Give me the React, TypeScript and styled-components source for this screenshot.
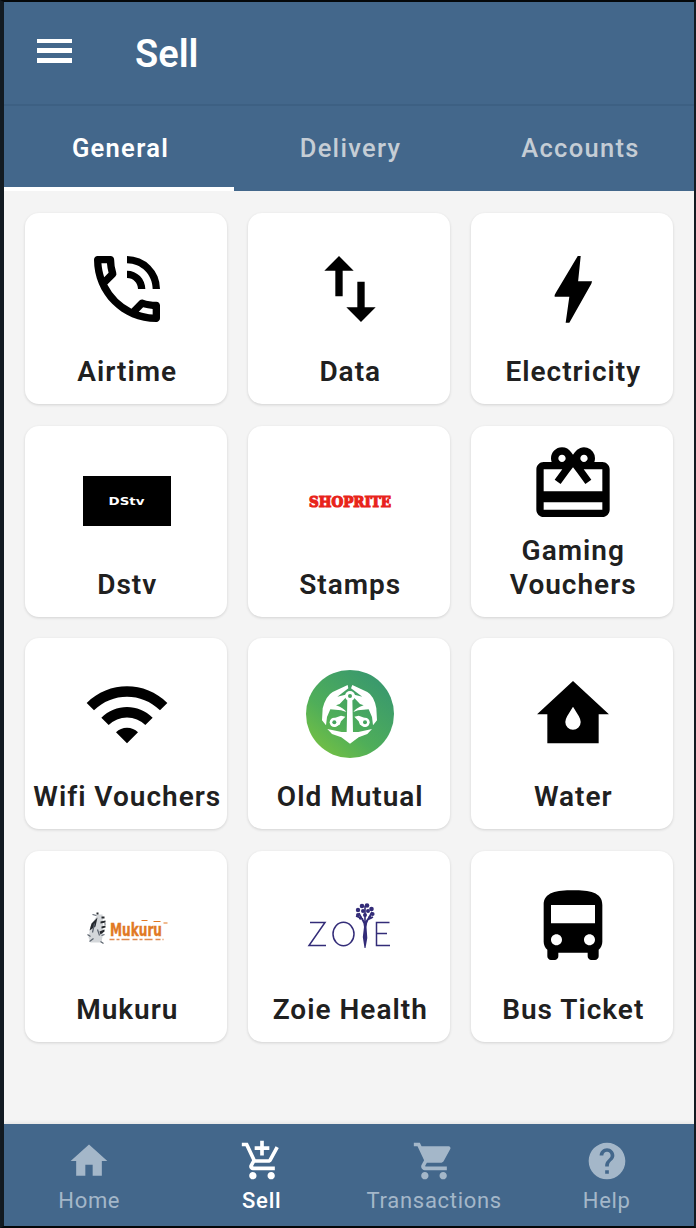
import React from 'react';
import styled, { createGlobalStyle } from 'styled-components';
import {
  MdOutlinePhoneInTalk, MdImportExport, MdRedeem, MdWifi, MdDirectionsBus,
  MdHome, MdAddShoppingCart, MdShoppingCart, MdHelp,
} from 'react-icons/md';

const GlobalStyle = createGlobalStyle`
  * { box-sizing: border-box; }
  body { margin: 0; background: #101820; font-family: Roboto, "Liberation Sans", sans-serif; }
`;

const Screen = styled.div`
  height: 1228px;
  border: solid #131b22;
  border-width: 2px 2px 2px 4px;
  border-top-color: #05080a;
  border-bottom-color: #05080a;
  display: flex;
  flex-direction: column;
  background: #f4f4f4;
`;

const AppBar = styled.header`
  height: 104px;
  flex: none;
  display: flex;
  align-items: center;
  padding: 0 33px 2px;
  background: #43678b;
  border-bottom: 2px solid #3d6083;
`;

const MenuButton = styled.button`
  width: 35px;
  height: 24px;
  padding: 0;
  border: 0;
  background: none;
  display: flex;
  flex-direction: column;
  justify-content: space-between;
  margin-bottom: 3px;
`;

const MenuLine = styled.span`
  height: 4.5px;
  background: #fff;
`;

const Title = styled.h1`
  margin: 3px 0 0 63px;
  font-size: 38px;
  font-weight: 600;
  line-height: 44px;
  color: #fff;
`;

const Tabs = styled.nav`
  height: 85px;
  flex: none;
  display: grid;
  grid-template-columns: repeat(3, 1fr);
  background: #43678b;
`;

const Tab = styled.button<{ $active?: boolean }>`
  border: 0;
  border-bottom: 4px solid ${p => (p.$active ? '#fff' : 'transparent')};
  background: none;
  padding: 2px 0 0 3px;
  font: ${p => (p.$active ? 600 : 500)} 25.5px/30px Roboto, sans-serif;
  letter-spacing: 1.3px;
  color: ${p => (p.$active ? '#fff' : '#c5cdd5')};
`;

const Grid = styled.main`
  flex: 1;
  display: grid;
  grid-template-columns: repeat(3, 202px);
  grid-auto-rows: 191px;
  gap: 21.7px 21px;
  padding: 22px 21px;
`;

const Card = styled.div`
  border-radius: 14px;
  background: #fff;
  box-shadow: 0 1px 3px rgba(0, 0, 0, 0.14);
  display: flex;
  flex-direction: column;
  align-items: center;
  padding: 9px 0 15px 1.5px;
`;

const CardPicture = styled.div`
  flex: 1;
  min-height: 0;
  width: 88px;
  display: flex;
  align-items: center;
  justify-content: center;
  color: #000;
  svg { flex: none; overflow: visible; }
`;

const CardLabel = styled.div`
  padding-left: 1px;
  font-size: 28px;
  font-weight: 600;
  line-height: 34px;
  letter-spacing: 1px;
  text-align: center;
  white-space: pre;
  color: #202020;
`;

const BottomNav = styled.footer`
  height: 102px;
  flex: none;
  display: grid;
  grid-template-columns: repeat(4, 1fr);
  background: #43678b;
  box-shadow: 0 -1px 4px rgba(0, 0, 0, 0.08);
`;

const NavItem = styled.button<{ $active?: boolean }>`
  border: 0;
  background: none;
  padding: 15px 2px 0 0;
  display: flex;
  flex-direction: column;
  align-items: center;
  gap: 4px;
  font: ${p => (p.$active ? 500 : 400)} 22px/28px Roboto, sans-serif;
  letter-spacing: ${p => (p.$active ? 0.8 : 0.7)}px;
  color: ${p => (p.$active ? '#fff' : '#a4b7c9')};
`;

const BoltIcon = () => (
  <svg width="88" height="88" viewBox="0 0 24 24">
    <path d="M13.3 3H14.1L13.4 9.9H17.2L17 10.6L11 21.2H10L11 14.1H7Q6.9 13.6 7.4 12.9Z" />
  </svg>
);

const WaterHouseIcon = () => (
  <svg width="88" height="88" viewBox="0 0 24 24">
    <path fillRule="evenodd" d="M12 3L2.2 12.1H5V20H19V12.1H21.8ZM12 10L13.6 12.6Q14.1 13.5 14.1 14.2A2.1 2.1 0 0 1 9.9 14.2Q9.9 13.5 10.4 12.6Z" />
  </svg>
);

const DstvLogo = () => (
  <svg width="88" height="50" viewBox="0 0 88 50">
    <rect width="88" height="50" />
    <text x="25.5" y="28.5" fill="#fff" fontFamily="DejaVu Sans" fontWeight="700" fontSize="10" textLength="36" lengthAdjust="spacingAndGlyphs">DStv</text>
  </svg>
);

const ShopriteLogo = () => (
  <svg width="88" height="50" viewBox="0 0 88 50">
    <text x="3" y="30.7" fill="#e8231a" stroke="#e8231a" strokeWidth="1.2" fontFamily="DejaVu Serif" fontWeight="700" fontSize="14" textLength="82" lengthAdjust="spacingAndGlyphs">SHOPRITE</text>
  </svg>
);

const OldMutualLogo = () => (
  <svg width="88" height="88" viewBox="48 30 264 264">
    <defs>
      <linearGradient id="mutual" x1="0.1" y1="0.9" x2="0.75" y2="0.1">
        <stop offset="0" stopColor="#74c044" />
        <stop offset="0.4" stopColor="#4fae59" />
        <stop offset="1" stopColor="#3b9a6c" />
      </linearGradient>
    </defs>
    <circle cx="180" cy="162" r="132" fill="url(#mutual)" />
    <g fill="#fff">
      <path d="M173 75L128 96Q108 107 98 145L96 181L108 196L111 171L121 148L153 151L169 156Q163 145 138 136L149 132L171 109L166 104L142 110L175 85Z" />
      <path d="M187 75L232 96Q252 107 259 145L261 181L249 196L246 171L236 148L204 151L190 156Q196 145 221 136L210 132L188 109L193 104L217 110L183 85Z" />
      <path d="M172 115H187L189 216H205L246 207L232 222L206 232L180 251L154 232L126 222L112 207L155 216H170Z" />
      <path d="M134 174L153 167L166 170L153 184L149 194L133 201L122 190Z" />
      <path d="M225 174L206 167L193 170L206 184L210 194L226 201L237 190Z" />
      <circle cx="180" cy="108" r="15" />
      <circle cx="133" cy="187" r="14" />
      <circle cx="225" cy="187" r="14" />
    </g>
    <g fill="#46a45f">
      <circle cx="180" cy="108" r="6" />
      <circle cx="133" cy="187" r="6" />
      <circle cx="225" cy="187" r="6" />
    </g>
  </svg>
);

const MukuruLogo = () => (
  <svg width="88" height="50" viewBox="0 0 88 50">
    <g transform="translate(0.5 4.5)">
      <path d="M14 8L19 8L20 24L18 36L7 36L5 31L7 20Z" fill="#d4d7da" />
      <path d="M8 17L14 11L12 20L6 24ZM13 6h2v2h-2zM18 10h3v2h-3zM17 15l5-1v2l-5 1zM18 20l4-1v2l-4 1zM16 25l5-2v2l-4 3z" fill="#25282d" />
      <path d="M9 8l4 1M4 28l3 2M6 35l4-3M14 23l2 6M18 29l3-1M17 35l3 2M11 17l-2 9M21 17l1 1" stroke="#59616c" strokeWidth="1.2" fill="none" />
      <text x="26.5" y="29.5" fill="#e17924" stroke="#e17924" strokeWidth="0.4" fontFamily="DejaVu Sans" fontWeight="700" fontSize="17" textLength="52" lengthAdjust="spacingAndGlyphs">Mukuru</text>
      <path d="M58 14h6M70 15h7M80 16.5h4" stroke="#e17924" strokeWidth="1.2" />
      <path d="M26 33H80" stroke="#df8a50" strokeWidth="1.3" strokeDasharray="5 2 3 2 8 3" />
    </g>
  </svg>
);

const ZoieLogo = () => (
  <svg width="88" height="50" viewBox="0 0 88 50">
    <g fill="none" stroke="#332c78" strokeWidth="1.5">
      <path d="M4 20.5H19L3 43.5H20" />
      <ellipse cx="37.5" cy="32" rx="10.5" ry="11.8" />
      <path d="M83.5 20.5H70.5V43.5H84M70.5 31.5H81" />
      <path d="M58 21L53 11M59 21V4M60 21L66 10M57 17L50 14M61 18L67 15" strokeWidth="1.6" />
    </g>
    <g fill="#332c78">
      <path d="M56.5 16L59 20L62 16L60.5 25L61.3 36L59.5 46H58.5L56.8 35L58 25Z" />
      <circle cx="52" cy="8" r="2.2" /><circle cx="56" cy="4" r="2.3" />
      <circle cx="61" cy="3.5" r="2.3" /><circle cx="65.5" cy="7" r="2.3" />
      <circle cx="52" cy="13" r="2" /><circle cx="66.5" cy="12" r="2.1" />
      <circle cx="57" cy="9" r="2" /><circle cx="62" cy="9" r="2" />
      <circle cx="59" cy="13" r="2" /><circle cx="64" cy="15.5" r="1.7" />
      <circle cx="54.5" cy="16" r="1.7" />
    </g>
  </svg>
);

const services = [
  { label: 'Airtime', picture: <MdOutlinePhoneInTalk size={88} /> },
  { label: 'Data', picture: <MdImportExport size={88} /> },
  { label: 'Electricity', picture: <BoltIcon /> },
  { label: 'Dstv', picture: <DstvLogo /> },
  { label: 'Stamps', picture: <ShopriteLogo /> },
  { label: 'Gaming\nVouchers', picture: <MdRedeem size={88} /> },
  { label: 'Wifi Vouchers', picture: <MdWifi size={88} /> },
  { label: 'Old Mutual', picture: <OldMutualLogo /> },
  { label: 'Water', picture: <WaterHouseIcon /> },
  { label: 'Mukuru', picture: <MukuruLogo /> },
  { label: 'Zoie Health', picture: <ZoieLogo /> },
  { label: 'Bus Ticket', picture: <MdDirectionsBus size={88} /> },
];

const navItems = [
  { label: 'Home', Icon: MdHome },
  { label: 'Sell', Icon: MdAddShoppingCart, active: true },
  { label: 'Transactions', Icon: MdShoppingCart },
  { label: 'Help', Icon: MdHelp },
];

export default function App() {
  return (
    <>
      <GlobalStyle />
      <Screen>
        <AppBar>
          <MenuButton aria-label="Menu"><MenuLine /><MenuLine /><MenuLine /></MenuButton>
          <Title>Sell</Title>
        </AppBar>
        <Tabs>
          <Tab $active>General</Tab>
          <Tab>Delivery</Tab>
          <Tab>Accounts</Tab>
        </Tabs>
        <Grid>
          {services.map(s => (
            <Card key={s.label}>
              <CardPicture>{s.picture}</CardPicture>
              <CardLabel>{s.label}</CardLabel>
            </Card>
          ))}
        </Grid>
        <BottomNav>
          {navItems.map(({ label, Icon, active }) => (
            <NavItem key={label} $active={active}>
              <Icon size={44} />
              {label}
            </NavItem>
          ))}
        </BottomNav>
      </Screen>
    </>
  );
}
